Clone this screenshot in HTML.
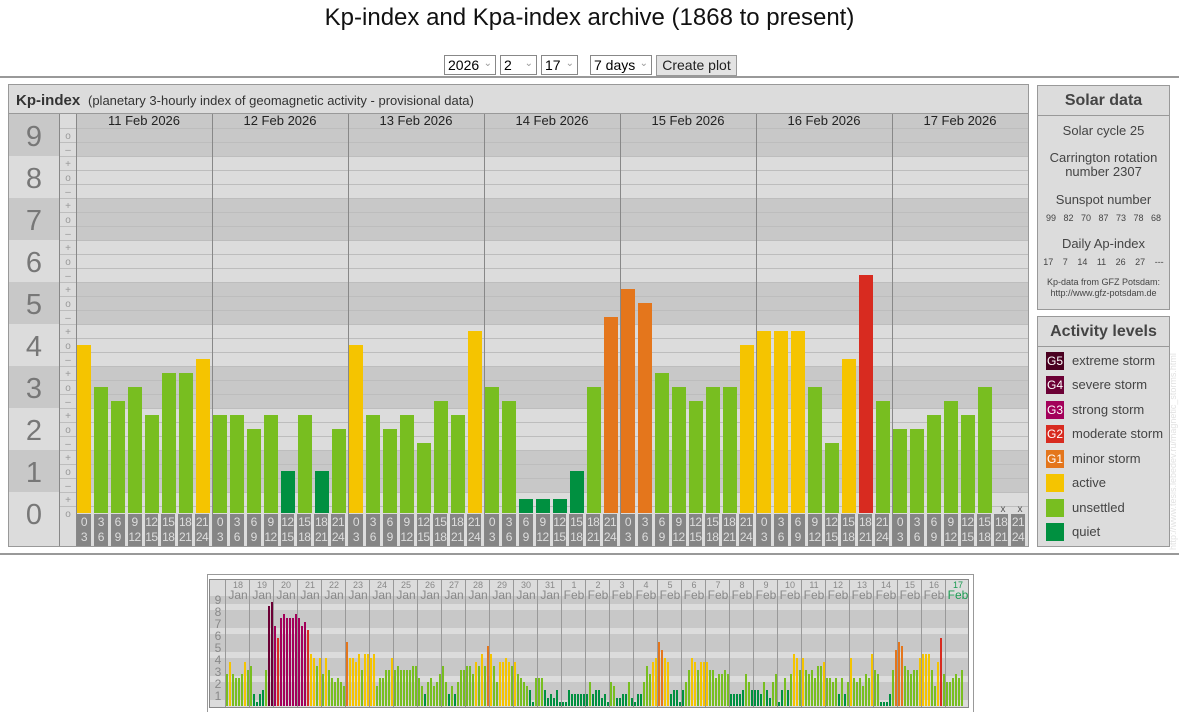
<!DOCTYPE html>
<html><head><meta charset="utf-8"><style>
*{margin:0;padding:0;box-sizing:border-box}
body{width:1179px;height:712px;background:#fff;font-family:"Liberation Sans",Arial,sans-serif;position:relative;overflow:hidden;color:#222}
.abs{position:absolute}
h1{position:absolute;left:0;width:1179px;top:4px;text-align:center;font-weight:normal;font-size:24px;color:#111}
.sel{position:absolute;top:55px;height:20px;border:1px solid #888;background:#fff;font-size:14px;padding:1px 3px;color:#000}
.sel i{position:absolute;right:3px;top:2px;font-style:normal;color:#999;font-size:10px}
.btn{position:absolute;top:55px;left:656px;width:81px;height:21px;border:1px solid #999;background:#e3e3e3;font-size:14px;text-align:center;line-height:19px}
.hr{position:absolute;left:0;width:1179px;height:2px;background:#999}
.hours{position:absolute;left:76px;top:514px;display:flex}
.day{width:136px;display:flex;padding-left:1px}
.day b{display:block;width:14px;height:32px;margin-right:3px;background:#858585;color:#ddd;font-weight:normal;font-size:12px;line-height:15px;text-align:center;padding-top:1px;letter-spacing:-0.5px;white-space:nowrap;overflow:hidden}
.box{position:absolute;border:1px solid #999;background:#dcdcdc;text-align:center;color:#444}
.box h2{font-size:16px;height:30px;line-height:29px;border-bottom:1px solid #999;color:#444}
.leg{position:absolute;left:8px;font-size:13px;color:#444;height:18px;line-height:18px}
.leg s{position:absolute;left:0;top:0;width:18px;height:18px;text-decoration:none;color:#fff;font-size:12px;text-align:center;line-height:18px}
.leg span{position:absolute;left:26px;white-space:nowrap}
.sd{display:flex;position:absolute;left:226px;top:580px}
.sd div{width:24px;text-align:center;color:#888;font-size:12px;line-height:10px}
.sd div u{display:block;font-size:9px;text-decoration:none;line-height:9px;padding-top:1px}
</style></head><body>
<h1>Kp-index and Kpa-index archive (1868 to present)</h1>
<div class="sel" style="left:444px;width:52px">2026<i>&#8964;</i></div>
<div class="sel" style="left:500px;width:37px">2<i>&#8964;</i></div>
<div class="sel" style="left:541px;width:37px">17<i>&#8964;</i></div>
<div class="sel" style="left:590px;width:62px">7 days<i>&#8964;</i></div>
<div class="btn">Create plot</div>
<div class="hr" style="top:76px"></div>
<div class="hr" style="top:553px"></div>

<svg class="abs" style="left:0;top:0" width="1179" height="712" id="sv">
<rect x="8.5" y="84.5" width="1020" height="462" fill="#dcdcdc" stroke="#999"/>
<line x1="9" y1="113.5" x2="1028" y2="113.5" stroke="#999"/>
<g id="g"></g>
<text x="16" y="105" font-size="15" font-weight="bold" fill="#333">Kp-index</text>
<text x="88" y="105" font-size="13" fill="#333">(planetary 3-hourly index of geomagnetic activity - provisional data)</text>
<g font-size="13" fill="#222" text-anchor="middle">
<text x="144" y="125">11 Feb 2026</text><text x="280" y="125">12 Feb 2026</text><text x="416" y="125">13 Feb 2026</text><text x="552" y="125">14 Feb 2026</text><text x="688" y="125">15 Feb 2026</text><text x="824" y="125">16 Feb 2026</text><text x="960" y="125">17 Feb 2026</text>
</g>
<g font-size="29" fill="#777" text-anchor="middle">
<text x="34" y="146">9</text><text x="34" y="188">8</text><text x="34" y="230">7</text><text x="34" y="272">6</text><text x="34" y="314">5</text><text x="34" y="356">4</text><text x="34" y="398">3</text><text x="34" y="440">2</text><text x="34" y="482">1</text><text x="34" y="524">0</text>
</g>
<g font-size="10" fill="#999" text-anchor="middle">
<text x="68" y="139">o</text><text x="68" y="153">–</text><text x="68" y="167">+</text><text x="68" y="181">o</text><text x="68" y="195">–</text><text x="68" y="209">+</text><text x="68" y="223">o</text><text x="68" y="237">–</text><text x="68" y="251">+</text><text x="68" y="265">o</text><text x="68" y="279">–</text><text x="68" y="293">+</text><text x="68" y="307">o</text><text x="68" y="321">–</text><text x="68" y="335">+</text><text x="68" y="349">o</text><text x="68" y="363">–</text><text x="68" y="377">+</text><text x="68" y="391">o</text><text x="68" y="405">–</text><text x="68" y="419">+</text><text x="68" y="433">o</text><text x="68" y="447">–</text><text x="68" y="461">+</text><text x="68" y="475">o</text><text x="68" y="489">–</text><text x="68" y="503">+</text><text x="68" y="517">o</text>
<text x="1003" y="512" fill="#555">x</text><text x="1020" y="512" fill="#555">x</text>
</g>
<rect x="207.5" y="574.5" width="766" height="140" fill="#fff" stroke="#999"/>
<rect x="209.5" y="579.5" width="759" height="128" fill="#dcdcdc" stroke="#888"/>
<g id="g2"></g>
<g font-size="12" fill="#888" text-anchor="middle">
<text x="218" y="604">9</text><text x="218" y="616">8</text><text x="218" y="628">7</text><text x="218" y="640">6</text><text x="218" y="652">5</text><text x="218" y="664">4</text><text x="218" y="676">3</text><text x="218" y="688">2</text><text x="218" y="700">1</text>
</g>
<text x="1176" y="550" font-size="9" fill="#e2e2e2" transform="rotate(-90 1176 550)">http://www.tesis.lebedev.ru/magnetic_storms.html</text>
</svg>

<div class="hours">
<div class="day"><b>0<br>3</b><b>3<br>6</b><b>6<br>9</b><b>9<br>12</b><b>12<br>15</b><b>15<br>18</b><b>18<br>21</b><b>21<br>24</b></div>
<div class="day"><b>0<br>3</b><b>3<br>6</b><b>6<br>9</b><b>9<br>12</b><b>12<br>15</b><b>15<br>18</b><b>18<br>21</b><b>21<br>24</b></div>
<div class="day"><b>0<br>3</b><b>3<br>6</b><b>6<br>9</b><b>9<br>12</b><b>12<br>15</b><b>15<br>18</b><b>18<br>21</b><b>21<br>24</b></div>
<div class="day"><b>0<br>3</b><b>3<br>6</b><b>6<br>9</b><b>9<br>12</b><b>12<br>15</b><b>15<br>18</b><b>18<br>21</b><b>21<br>24</b></div>
<div class="day"><b>0<br>3</b><b>3<br>6</b><b>6<br>9</b><b>9<br>12</b><b>12<br>15</b><b>15<br>18</b><b>18<br>21</b><b>21<br>24</b></div>
<div class="day"><b>0<br>3</b><b>3<br>6</b><b>6<br>9</b><b>9<br>12</b><b>12<br>15</b><b>15<br>18</b><b>18<br>21</b><b>21<br>24</b></div>
<div class="day"><b>0<br>3</b><b>3<br>6</b><b>6<br>9</b><b>9<br>12</b><b>12<br>15</b><b>15<br>18</b><b>18<br>21</b><b>21<br>24</b></div>
</div>

<div class="box" style="left:1037px;top:85px;width:133px;height:225px">
<h2>Solar data</h2>
<div style="font-size:13px;margin-top:7px">Solar cycle 25</div>
<div style="font-size:13px;margin-top:13px;line-height:14px">Carrington rotation<br>number 2307</div>
<div style="font-size:13px;margin-top:13px">Sunspot number</div>
<div style="font-size:9px;margin-top:6px;word-spacing:5px">99 82 70 87 73 78 68</div>
<div style="font-size:13px;margin-top:13px">Daily Ap-index</div>
<div style="font-size:9px;margin-top:6px;word-spacing:7px">17 7 14 11 26 27 ---</div>
<div style="font-size:9px;margin-top:10px;line-height:11px">Kp-data from GFZ Potsdam:<br>http://www.gfz-potsdam.de</div>
</div>
<div class="box" style="left:1037px;top:316px;width:133px;height:231px">
<h2>Activity levels</h2>
<div class="leg" style="top:35px"><s style="background:#4a0020">G5</s><span>extreme storm</span></div>
<div class="leg" style="top:59px"><s style="background:#6b0035">G4</s><span>severe storm</span></div>
<div class="leg" style="top:84px"><s style="background:#a3005a">G3</s><span>strong storm</span></div>
<div class="leg" style="top:108px"><s style="background:#d82b20">G2</s><span>moderate storm</span></div>
<div class="leg" style="top:133px"><s style="background:#e4761c">G1</s><span>minor storm</span></div>
<div class="leg" style="top:157px"><s style="background:#f5c400"></s><span>active</span></div>
<div class="leg" style="top:182px"><s style="background:#78be20"></s><span>unsettled</span></div>
<div class="leg" style="top:206px"><s style="background:#009040"></s><span>quiet</span></div>
</div>

<div class="sd">
<div><u>18</u>Jan</div><div><u>19</u>Jan</div><div><u>20</u>Jan</div><div><u>21</u>Jan</div><div><u>22</u>Jan</div><div><u>23</u>Jan</div><div><u>24</u>Jan</div><div><u>25</u>Jan</div><div><u>26</u>Jan</div><div><u>27</u>Jan</div><div><u>28</u>Jan</div><div><u>29</u>Jan</div><div><u>30</u>Jan</div><div><u>31</u>Jan</div><div><u>1</u>Feb</div><div><u>2</u>Feb</div><div><u>3</u>Feb</div><div><u>4</u>Feb</div><div><u>5</u>Feb</div><div><u>6</u>Feb</div><div><u>7</u>Feb</div><div><u>8</u>Feb</div><div><u>9</u>Feb</div><div><u>10</u>Feb</div><div><u>11</u>Feb</div><div><u>12</u>Feb</div><div><u>13</u>Feb</div><div><u>14</u>Feb</div><div><u>15</u>Feb</div><div><u>16</u>Feb</div><div style="color:#1a9a50"><u>17</u>Feb</div>
</div>

<script>
var NS="http://www.w3.org/2000/svg";
function R(p,x,y,w,h,f){var r=document.createElementNS(NS,"rect");r.setAttribute("x",x);r.setAttribute("y",y);r.setAttribute("width",w);r.setAttribute("height",h);r.setAttribute("fill",f);p.appendChild(r);}
function L(p,x1,y1,x2,y2,c){var l=document.createElementNS(NS,"line");l.setAttribute("x1",x1);l.setAttribute("y1",y1);l.setAttribute("x2",x2);l.setAttribute("y2",y2);l.setAttribute("stroke",c);p.appendChild(l);}
function col(t){return t<=4?"#009040":t<=10?"#78be20":t<=13?"#f5c400":t<=16?"#e4761c":t<=19?"#d82b20":t<=24?"#a3005a":"#6b0035";}
var g=document.getElementById("g");
for(var k=9;k>=0;k--){var y0=Math.max(114,513-14*(3*k+1.5)),y1=Math.min(513,513-14*(3*k-1.5));
 if(k%2){R(g,9,y0,50,y1-y0,"#c8c8c8");R(g,76,y0,952,y1-y0,"#c8c8c8");}}
R(g,9,513,50,33,"#dcdcdc");
for(var t=0;t<28;t++){var y=513-14*(t+0.5)+0.5;L(g,76,y,1028,y,"#bdbdbd");L(g,59,y,76,y,"#bdbdbd");}
L(g,59.5,114,59.5,546,"#888");L(g,76.5,114,76.5,546,"#888");
for(var d=1;d<7;d++){var x=76+136*d+0.5;L(g,x,114,x,546,"#888");}
var v=[12,9,8,9,7,10,10,11, 7,7,6,7,3,7,3,6, 12,7,6,7,5,8,7,13, 9,8,1,1,1,3,9,14, 16,15,10,9,8,9,9,12, 13,13,13,9,5,11,17,8, 6,6,7,8,7,9];
for(var i=0;i<v.length;i++){var d=Math.floor(i/8),s=i%8,x=77+136*d+17*s,h=14*v[i];R(g,x,513-h,14,h,col(v[i]));}
var g2=document.getElementById("g2");
for(var k=9;k>=0;k--){var y0=Math.max(596,700-12*k-6),y1=Math.min(707,706-12*k+6);if(k%2)R(g2,210,y0,758,y1-y0,"#c8c8c8");}
R(g2,210,580,758,16,"#dcdcdc");
for(var d=1;d<31;d++){var x=225+24*d+0.5;L(g2,x,580,x,707,"#999");}
L(g2,225.5,580,225.5,707,"#999");
var w=[8,11,8,7,7,8,11,9, 10,3,1,3,4,9,25,26, 20,17,22,23,22,22,22,23, 22,20,21,19,13,12,10,12, 8,12,9,7,6,7,6,5, 16,12,12,11,13,9,13,13, 12,13,5,7,7,9,9,12, 9,10,9,9,9,9,10,10, 7,5,3,6,7,5,6,8, 10,6,3,5,3,6,9,9, 10,10,8,11,10,13,10,15, 13,10,6,11,11,12,11,10, 11,8,7,6,5,4,1,7, 7,7,4,2,3,2,4,1, 1,1,4,3,3,3,3,3, 3,6,3,4,4,2,3,1, 6,5,2,2,3,3,6,2, 1,3,3,6,10,8,11,12, 16,14,12,11,3,4,4,1, 4,6,9,12,11,9,11,11, 11,9,9,7,8,8,9,8, 3,3,3,3,4,8,6,4, 4,4,3,6,4,2,6,8, 1,4,7,4,8,13,12,9].concat(v.slice(0,54));
for(var i=0;i<w.length;i++){var d=Math.floor(i/8),s=i%8,x=226+24*d+3*s,h=4*w[i];R(g2,x,706-h,2,h,col(w[i]));}
</script>
</body></html>
